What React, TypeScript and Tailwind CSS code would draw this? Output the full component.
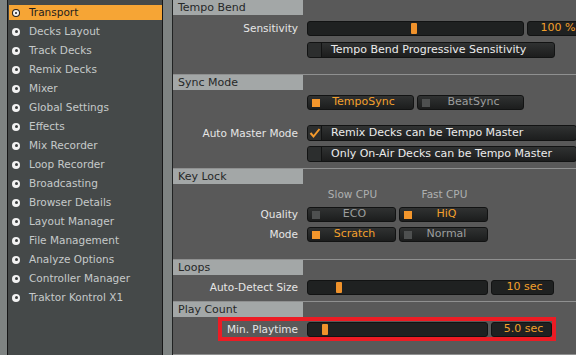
import React from "react";

const items = [
  "Transport",
  "Decks Layout",
  "Track Decks",
  "Remix Decks",
  "Mixer",
  "Global Settings",
  "Effects",
  "Mix Recorder",
  "Loop Recorder",
  "Broadcasting",
  "Browser Details",
  "Layout Manager",
  "File Management",
  "Analyze Options",
  "Controller Manager",
  "Traktor Kontrol X1",
];

function Header({ title }: { title: string }) {
  return (
    <div className="w-[130px] h-[15px] bg-[#a3a7a7] text-[11px] leading-[15px] text-[#262727] pl-[5px] whitespace-nowrap">
      {title}
    </div>
  );
}

function Label({ text, w = 125 }: { text: string; w?: number }) {
  return (
    <div
      className="shrink-0 text-right text-[10.5px] leading-[15px] text-[#e6e6e6] whitespace-nowrap"
      style={{ width: w }}
    >
      {text}
    </div>
  );
}

function Slider({ w, pos }: { w: number; pos: number }) {
  return (
    <div
      className="relative shrink-0 h-[15px] rounded-[3px] bg-[#1f2121] border border-[#121313]"
      style={{ width: w }}
    >
      <div
        className="absolute top-[1px] w-[6px] h-[11px] rounded-[1px] bg-[#f0922b]"
        style={{ left: pos }}
      />
    </div>
  );
}

function ValueBox({ w, text, pl = 4 }: { w: number; text: string; pl?: number }) {
  return (
    <div
      className="shrink-0 h-[15px] rounded-[3px] bg-[#1f2121] border border-[#121313] flex items-center justify-center text-[11px] text-[#f3a02c] whitespace-nowrap"
      style={{ width: w, paddingLeft: pl }}
    >
      {text}
    </div>
  );
}

function IndButton({
  w,
  text,
  active,
}: {
  w: number;
  text: string;
  active: boolean;
}) {
  return (
    <div
      className="relative shrink-0 h-[15px] rounded-[3px] bg-gradient-to-b from-[#303232] to-[#1c1d1d] border border-[#121313] flex items-center justify-center pl-[6px] text-[11px] whitespace-nowrap"
      style={{ width: w }}
    >
      <div
        className={
          "absolute left-[4px] top-[3px] w-[8px] h-[8px] " +
          (active ? "bg-[#f3962c]" : "bg-[#4e5050]")
        }
      />
      <span className={active ? "text-[#f3a02c]" : "text-[#9c9e9e]"}>{text}</span>
    </div>
  );
}

function CheckButton({
  w,
  text,
  checked,
}: {
  w: number;
  text: string;
  checked: boolean;
}) {
  return (
    <div
      className="shrink-0 h-[16px] rounded-[3px] bg-gradient-to-b from-[#303232] to-[#1c1d1d] border border-[#121313] flex items-stretch text-[11px] text-[#ececec] whitespace-nowrap overflow-hidden"
      style={{ width: w }}
    >
      <div className="w-[14px] shrink-0 bg-[#2c2e2e] border-r border-[#121313] flex items-center justify-center">
        {checked && (
          <svg width="12" height="12" viewBox="0 0 12 12">
            <polyline
              points="1.5,6 4.5,9.5 10.5,2"
              fill="none"
              stroke="#f39a2c"
              strokeWidth="2"
            />
          </svg>
        )}
      </div>
      <div className="pl-[9px] leading-[14px]">{text}</div>
    </div>
  );
}

function Row({ children }: { children: React.ReactNode }) {
  return <div className="flex items-center h-[15px]">{children}</div>;
}

export default function App() {
  return (
    <div className="w-[576px] h-[355px] overflow-hidden bg-[#7e8382] flex font-['DejaVu_Sans',sans-serif]">
      {/* Left panel */}
      <div className="ml-[7px] w-[156px] h-full shrink-0 bg-[#454949] border-x border-[#161717] pt-[3px]">
        {items.map((it, i) => {
          const active = i === 0;
          return (
            <div key={it} className="h-[19px] flex items-center pl-[1px]">
              <div
                className={
                  "h-[15px] w-full flex items-center " +
                  (active ? "bg-[#f6a535]" : "")
                }
              >
                <div
                  className={
                    "ml-[3px] w-[8px] h-[8px] rounded-full flex items-center justify-center " +
                    (active ? "bg-[#222] " : "bg-[#f2f2f2]")
                  }
                >
                  {active ? (
                    <div className="w-[6px] h-[6px] rounded-full bg-[#f2f2f2] flex items-center justify-center">
                      <div className="w-[2px] h-[2px] rounded-full bg-[#222]" />
                    </div>
                  ) : (
                    <div className="w-[3px] h-[3px] rounded-full bg-[#3a3d3d]" />
                  )}
                </div>
                <span
                  className={
                    "ml-[9px] text-[10.5px] whitespace-nowrap " +
                    (active ? "text-[#1e1e1e]" : "text-[#c6caca]")
                  }
                >
                  {it}
                </span>
              </div>
            </div>
          );
        })}
      </div>

      {/* Right panel */}
      <div className="ml-[9px] w-[420px] shrink-0 h-full border-l border-[#202222] bg-[#595959] overflow-hidden">
        {/* Tempo Bend */}
        <div className="pb-[17px]">
          <Header title="Tempo Bend" />
          <div className="pt-[6px] flex flex-col gap-[6px]">
            <Row>
              <Label text="Sensitivity" />
              <div className="ml-[9px] flex gap-[3px]">
                <Slider w={217} pos={103} />
                <ValueBox w={52} text="100 %" pl={10} />
              </div>
            </Row>
            <Row>
              <div className="ml-[134px]">
                <CheckButton w={248} text="Tempo Bend Progressive Sensitivity" checked={false} />
              </div>
            </Row>
          </div>
        </div>

        {/* Sync Mode */}
        <div className="border-t border-[#8f9090] pb-[6px]">
          <Header title="Sync Mode" />
          <div className="pt-[5px]">
            <Row>
              <div className="ml-[134px] flex gap-[3px]">
                <IndButton w={107} text="TempoSync" active={true} />
                <IndButton w={107} text="BeatSync" active={false} />
              </div>
            </Row>
            <div className="mt-[15px] flex items-center h-[16px]">
              <Label text="Auto Master Mode" />
              <div className="ml-[9px]">
                <CheckButton w={270} text="Remix Decks can be Tempo Master" checked={true} />
              </div>
            </div>
            <div className="mt-[5px] flex items-center h-[16px]">
              <div className="ml-[134px]">
                <CheckButton w={270} text="Only On-Air Decks can be Tempo Master" checked={false} />
              </div>
            </div>
          </div>
        </div>

        {/* Key Lock */}
        <div className="border-t border-[#8f9090] pb-[17px]">
          <Header title="Key Lock" />
          <div className="pt-[5px]">
            <div className="ml-[134px] flex gap-[3px] h-[12px] items-center text-[10.5px] text-[#aeb0b0]">
              <div className="w-[89px] text-center pl-[2px]">Slow CPU</div>
              <div className="w-[89px] text-center pl-[2px]">Fast CPU</div>
            </div>
            <div className="mt-[6px]">
              <Row>
                <Label text="Quality" />
                <div className="ml-[9px] flex gap-[3px]">
                  <IndButton w={89} text="ECO" active={false} />
                  <IndButton w={89} text="HiQ" active={true} />
                </div>
              </Row>
            </div>
            <div className="mt-[5px]">
              <Row>
                <Label text="Mode" />
                <div className="ml-[9px] flex gap-[3px]">
                  <IndButton w={89} text="Scratch" active={true} />
                  <IndButton w={89} text="Normal" active={false} />
                </div>
              </Row>
            </div>
          </div>
        </div>

        {/* Loops */}
        <div className="border-t border-[#8f9090] pb-[6px]">
          <Header title="Loops" />
          <div className="pt-[5px]">
            <Row>
              <Label text="Auto-Detect Size" />
              <div className="ml-[9px] flex gap-[3px]">
                <Slider w={181} pos={28} />
                <ValueBox w={63} text="10 sec" />
              </div>
            </Row>
          </div>
        </div>

        {/* Play Count */}
        <div className="border-t border-[#8f9090] pb-[13px]">
          <Header title="Play Count" />
          <div className="ml-[45px] w-[338px] h-[24px] border-4 border-[#ec1c24] flex items-center">
            <Label text="Min. Playtime" w={76} />
            <div className="ml-[9px] flex gap-[3px]">
              <Slider w={181} pos={14} />
              <ValueBox w={61} text="5.0 sec" />
            </div>
          </div>
        </div>

        <div className="border-t border-[#8f9090]">
          <Header title="" />
        </div>
      </div>
    </div>
  );
}
